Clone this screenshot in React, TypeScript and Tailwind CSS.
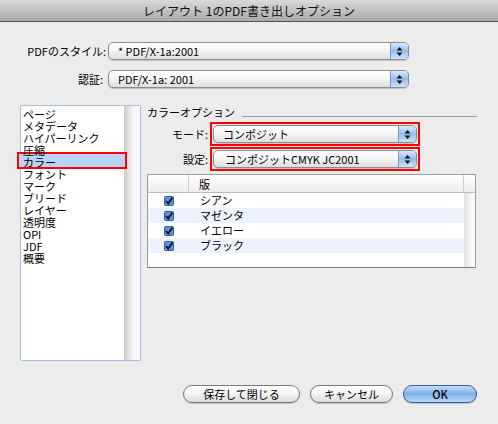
import React from 'react';

const font = "font-['Noto_Sans_CJK_JP','Noto_Sans',sans-serif]";

function Arrows() {
  return (
    <svg width="7" height="11" viewBox="0 0 7 11">
      <path d="M3.5 1 L6.5 4.5 L0.5 4.5 Z" fill="#111" />
      <path d="M3.5 10 L6.5 6.5 L0.5 6.5 Z" fill="#111" />
    </svg>
  );
}

function Popup({ text, className }: { text: string; className: string }) {
  return (
    <div
      className={`flex h-[18px] overflow-hidden rounded-[5px] border border-[#8c8c8c] bg-gradient-to-b from-white via-[#f4f4f4] to-[#dedede] shadow-[0_1px_1px_rgba(0,0,0,0.18)] ${className}`}
    >
      <div className="flex-1 pl-[9px] text-[11px] leading-[17px] text-black whitespace-nowrap">{text}</div>
      <div className="flex w-[18px] items-center justify-center border-l border-[#7b93bf] bg-gradient-to-b from-[#dbe9fb] via-[#93bdf0] to-[#cde3fa]">
        <Arrows />
      </div>
    </div>
  );
}

function Check() {
  return (
    <svg width="10" height="10" viewBox="0 0 10 10">
      <rect x="0.5" y="0.5" width="9" height="9" rx="1" fill="#5b93e0" stroke="#2f5fa8" />
      <path d="M2 5 L4.2 7.5 L8.5 1.5" fill="none" stroke="#111" strokeWidth="1.8" />
    </svg>
  );
}

const items = ['ページ', 'メタデータ', 'ハイパーリンク', '圧縮', 'カラー', 'フォント', 'マーク', 'ブリード', 'レイヤー', '透明度', 'OPI', 'JDF', '概要'];
const plates = ['シアン', 'マゼンタ', 'イエロー', 'ブラック'];

function PillButton({ label, className, blue }: { label: string; className: string; blue?: boolean }) {
  return (
    <button
      className={`h-[18px] rounded-full border text-[11px] leading-[16px] text-black shadow-[0_1px_1px_rgba(0,0,0,0.2)] ${
        blue
          ? 'border-[#3d5f99] bg-gradient-to-b from-[#c6dcf7] via-[#7fb0ea] to-[#b9d8f8] font-medium'
          : 'border-[#7a7a7a] bg-gradient-to-b from-white via-[#f3f3f3] to-[#dcdcdc]'
      } ${className}`}
    >
      {label}
    </button>
  );
}

export default function App() {
  return (
    <div className={`flex h-[424px] w-[498px] flex-col bg-[#ececec] ${font}`}>
      {/* title bar */}
      <div className="flex h-[22px] items-center justify-center border-b border-[#555] bg-gradient-to-b from-[#dadada] to-[#a9a9a9] text-[12px] text-[#111]">
        レイアウト 1のPDF書き出しオプション
      </div>

      {/* top popups */}
      <div className="mt-[20px] flex flex-col gap-[10px]">
        <div className="flex items-center">
          <div className="w-[106px] text-right text-[11px] leading-[14px]">PDFのスタイル:</div>
          <Popup text="* PDF/X-1a:2001" className="ml-[2px] w-[301px]" />
        </div>
        <div className="flex items-center">
          <div className="w-[103px] text-right text-[11px] leading-[14px]">認証:</div>
          <Popup text="PDF/X-1a: 2001" className="ml-[5px] w-[301px]" />
        </div>
      </div>

      <div className="mt-[17px] flex">
        {/* left list */}
        <div className="ml-[20px] flex h-[256px] w-[121px] rounded-[2px] border border-[#a3bde3] bg-white">
          <div className="relative flex w-[103px] flex-col pt-[2px]">
            <div className="absolute left-[-4px] top-[46px] h-[17px] w-[110px] border-2 border-[#ff0000] bg-[#b7d3f6]" />
            {items.map((it) => (
              <div key={it} className="relative h-[12px] pl-[2px] text-[11px] leading-[12px]">
                {it}
              </div>
            ))}
          </div>
          <div className="flex-1 bg-gradient-to-r from-[#c9c9c9] via-[#f3f3f3] to-white" />
        </div>

        {/* right panel */}
        <div className="ml-[6px] flex w-[330px] flex-col">
          <div className="flex items-end">
            <div className="text-[11px] leading-[14px]">カラーオプション</div>
            <div className="mb-[2px] ml-[7px] h-px flex-1 bg-[#9a9a9a]" />
          </div>

          <div className="mt-[3px] flex items-center">
            <div className="w-[61px] text-right text-[11px]">モード:</div>
            <div className="ml-[2px] border-2 border-[#ff0000] p-px">
              <Popup text="コンポジット" className="w-[204px]" />
            </div>
          </div>
          <div className="mt-px flex items-center">
            <div className="w-[61px] text-right text-[11px]">設定:</div>
            <div className="ml-[2px] border-2 border-[#ff0000] p-px">
              <Popup text="コンポジットCMYK JC2001" className="w-[204px] [&>div:first-child]:pl-[11px]" />
            </div>
          </div>

          {/* plates table */}
          <div className="mt-[3px] flex h-[94px] w-[329px] flex-col border border-[#9d9d9d] border-b-[#7c7c7c] bg-white">
            <div className="flex h-[18px] border-b border-[#bdbdbd] bg-gradient-to-b from-white to-[#ececec] text-[11px]">
              <div className="w-[41px] border-r border-[#cfcfcf]" />
              <div className="flex-1 border-r border-[#cfcfcf] pl-[10px] leading-[18px]">版</div>
              <div className="w-[11px]" />
            </div>
            <div className="flex flex-1">
              <div className="flex flex-1 flex-col">
                {plates.map((p, i) => (
                  <div key={p} className={`flex h-[15px] items-center ${i % 2 === 1 ? 'bg-[#edf3fe]' : 'bg-white'}`}>
                    <div className="flex w-[41px] justify-center">
                      <Check />
                    </div>
                    <div className="pl-[11px] text-[11px] leading-[15px]">{p}</div>
                  </div>
                ))}
              </div>
              <div className="w-[11px] bg-gradient-to-r from-[#e2e2e2] to-white" />
            </div>
          </div>
        </div>
      </div>

      {/* buttons */}
      <div className="mt-auto mb-[21px] flex pl-[183px]">
        <PillButton label="保存して閉じる" className="w-[117px]" />
        <PillButton label="キャンセル" className="ml-[10px] w-[83px]" />
        <PillButton label="OK" blue className="ml-[10px] w-[74px]" />
      </div>
    </div>
  );
}
